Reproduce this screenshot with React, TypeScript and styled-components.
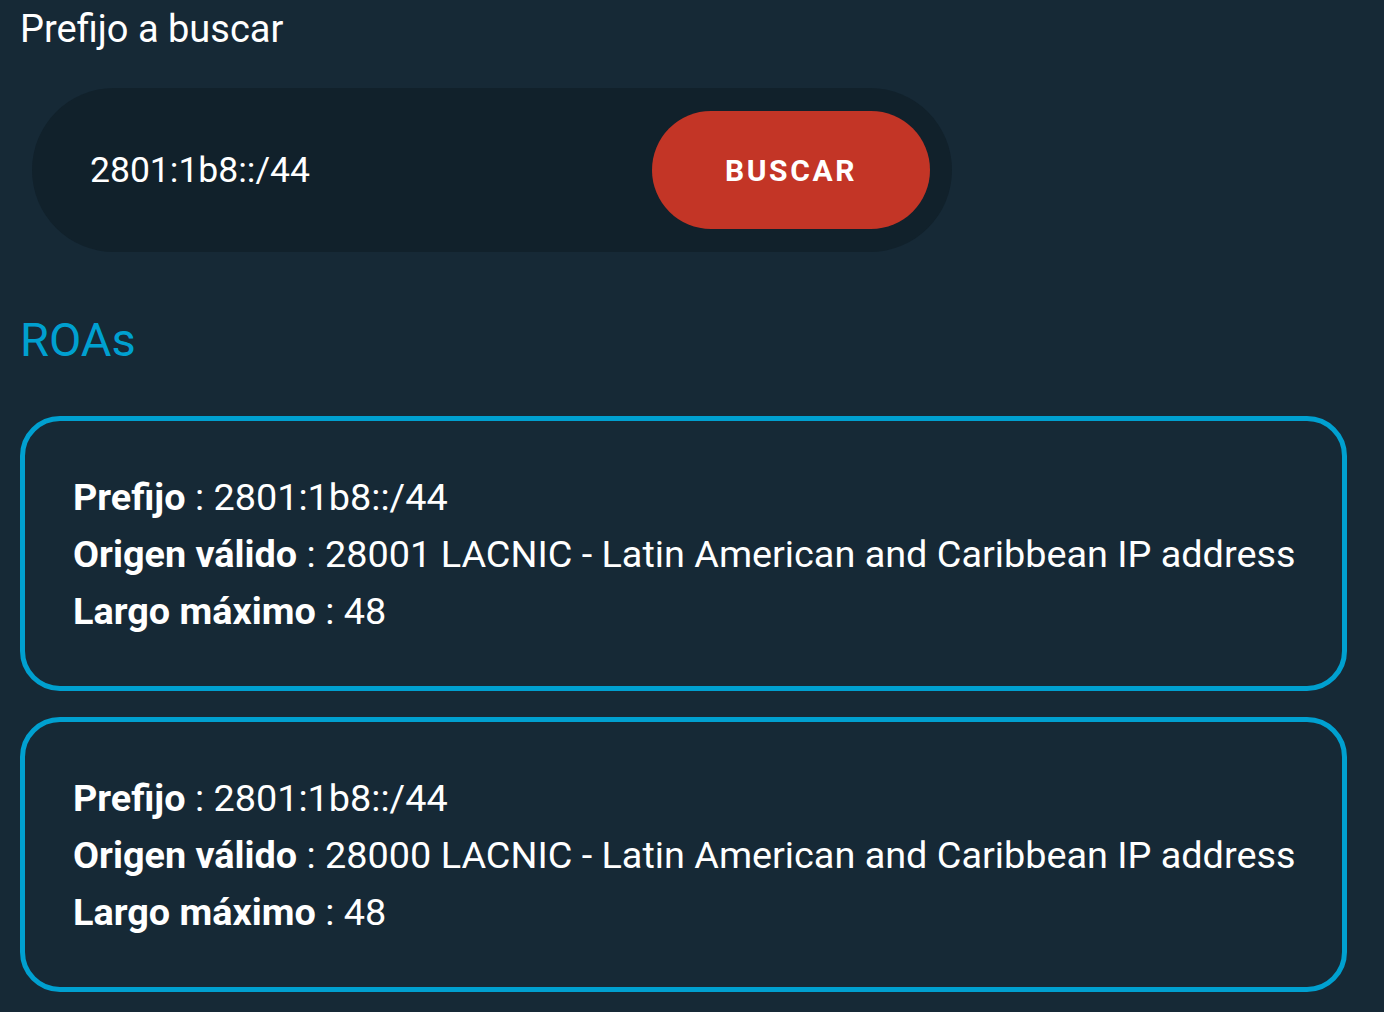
import React, { FC } from 'react';
import styled, { createGlobalStyle } from 'styled-components';

const GlobalStyle = createGlobalStyle`
  html, body {
    margin: 0;
    padding: 0;
    background: #162936;
  }
  body {
    font-family: Roboto, "Noto Sans", sans-serif;
    color: #ffffff;
  }
`;

const Page = styled.div`
  padding: 6px 37px 20px 20px;
  min-height: 1012px;
  box-sizing: border-box;
`;

const Label = styled.div`
  font-size: 38px;
  line-height: 46px;
  color: #ffffff;
`;

const SearchBar = styled.form`
  display: flex;
  align-items: center;
  justify-content: space-between;
  width: 920px;
  height: 164px;
  margin: 36px 0 0 12px;
  padding: 0 22px 0 58px;
  box-sizing: border-box;
  background: #11212b;
  border-radius: 82px;
`;

const SearchInput = styled.input`
  flex: 1;
  background: transparent;
  border: none;
  outline: none;
  color: #ffffff;
  font-family: Roboto, sans-serif;
  font-size: 35.5px;
  padding: 0;
`;

const SearchButton = styled.button`
  width: 278px;
  height: 118px;
  border: none;
  border-radius: 59px;
  background: #c33526;
  color: #ffffff;
  font-family: Roboto, sans-serif;
  font-weight: 700;
  font-size: 30px;
  letter-spacing: 2.6px;
  cursor: pointer;
`;

const SectionTitle = styled.h2`
  margin: 60px 0 0 0;
  font-size: 47px;
  line-height: 56px;
  font-weight: 400;
  color: #00a0d0;
`;

const CardList = styled.div`
  display: flex;
  flex-direction: column;
  gap: 26px;
  margin-top: 48px;
`;

const Card = styled.div`
  border: 5px solid #00a0d0;
  border-radius: 40px;
  padding: 48px 40px 44px 48px;
  height: 275px;
  box-sizing: border-box;
`;

const Row = styled.div`
  font-size: 37.8px;
  line-height: 57px;
  white-space: nowrap;
`;

const Key = styled.span`
  font-weight: 700;
`;

type Roa = { prefix: string; origin: string; maxLength: number };

const roas: Roa[] = [
  { prefix: '2801:1b8::/44', origin: '28001 LACNIC - Latin American and Caribbean IP address', maxLength: 48 },
  { prefix: '2801:1b8::/44', origin: '28000 LACNIC - Latin American and Caribbean IP address', maxLength: 48 },
];

const App: FC = () => {
  return (
    <Page>
      <GlobalStyle />
      <Label>Prefijo a buscar</Label>
      <SearchBar onSubmit={(e) => e.preventDefault()}>
        <SearchInput defaultValue="2801:1b8::/44" />
        <SearchButton type="submit">BUSCAR</SearchButton>
      </SearchBar>
      <SectionTitle>ROAs</SectionTitle>
      <CardList>
        {roas.map((roa, i) => (
          <Card key={i}>
            <Row><Key>Prefijo</Key> : {roa.prefix}</Row>
            <Row><Key>Origen válido</Key> : {roa.origin}</Row>
            <Row><Key>Largo máximo</Key> : {roa.maxLength}</Row>
          </Card>
        ))}
      </CardList>
    </Page>
  );
};

export default App;
